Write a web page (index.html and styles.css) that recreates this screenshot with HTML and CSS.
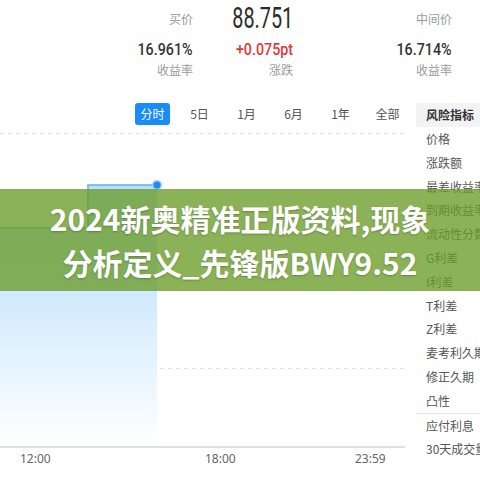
FILE: index.html
```html
<!DOCTYPE html>
<html lang="zh-CN">
<head>
<meta charset="utf-8">
<title>风险指标</title>
<link rel="stylesheet" href="styles.css">
</head>
<body>
<div class="page">
  <section class="quote">
    <div class="cell lbl top">买价</div>
    <div class="cell big"><span>88.751</span></div>
    <div class="cell lbl top">中间价</div>
    <div class="cell val"><span>16.961%</span></div>
    <div class="cell val up"><span>+0.075pt</span></div>
    <div class="cell val"><span>16.714%</span></div>
    <div class="cell lbl">收益率</div>
    <div class="cell lbl">涨跌</div>
    <div class="cell lbl">收益率</div>
  </section>

  <section class="main">
    <div class="chart">
      <nav class="tabs">
        <span class="tab active">分时</span>
        <span class="tab">5日</span>
        <span class="tab">1月</span>
        <span class="tab">6月</span>
        <span class="tab">1年</span>
        <span class="tab">全部</span>
      </nav>
      <svg class="plot" width="405" height="316" viewBox="0 0 405 316">
        <defs>
          <linearGradient id="fill" x1="0" y1="0" x2="0" y2="1">
            <stop offset="0" stop-color="#b9defe"/>
            <stop offset="0.45" stop-color="#d3ebfe"/>
            <stop offset="1" stop-color="#ffffff"/>
          </linearGradient>
        </defs>
        <line class="grid" x1="0" y1="0.5" x2="405" y2="0.5"/>
        <line class="grid" x1="0" y1="109.5" x2="405" y2="109.5"/>
        <line class="grid" x1="0" y1="235.5" x2="405" y2="235.5"/>
        <path d="M0 95 H88 V52 H157 V314 H0 Z" fill="url(#fill)"/>
        <path d="M0 95 H88 V52 H157" fill="none" stroke="#5fb0f5" stroke-width="1.5"/>
        <circle cx="157" cy="52" r="5" fill="#9fd0fb"/>
        <circle cx="157" cy="52" r="3.6" fill="#1c8df5"/>
        <line x1="0" y1="314" x2="405" y2="314" stroke="#d6d6d6" stroke-width="1.5"/>
      </svg>
      <div class="times"><span>12:00</span><span>18:00</span><span>23:59</span></div>
    </div>

    <aside class="menu">
      <div class="menu-head">风险指标</div>
      <ul class="menu-list">
        <li>价格</li>
        <li>涨跌额</li>
        <li>最差收益率</li>
        <li>到期收益率</li>
        <li>流动性分数</li>
        <li>G利差</li>
        <li>I利差</li>
        <li>T利差</li>
        <li>Z利差</li>
        <li>麦考利久期</li>
        <li>修正久期</li>
        <li>凸性</li>
      </ul>
      <ul class="menu-list sep">
        <li>应付利息</li>
        <li>30天成交量</li>
      </ul>
    </aside>
  </section>

  <div class="banner">
    <p>2024新奥精准正版资料,现象</p>
    <p>分析定义_先锋版BWY9.52</p>
  </div>
</div>
</body>
</html>
```

FILE: styles.css
```css
* { box-sizing: border-box; }

html, body {
  margin: 0;
  padding: 0;
  background: #ffffff;
}

body {
  font-family: "Noto Sans", "Noto Sans CJK SC", sans-serif;
  color: #333333;
  width: 480px;
  height: 480px;
  overflow: hidden;
}

.page {
  position: relative;
  width: 480px;
  height: 480px;
}

/* ---------- quote header ---------- */
.quote {
  display: grid;
  grid-template-columns: 193px 100px 159px;
  grid-template-rows: 38px 22px 22px;
  height: 100px;
}

.cell {
  text-align: right;
  white-space: nowrap;
}

.lbl {
  font-size: 12px;
  line-height: 20px;
  color: #9a9a9a;
  font-family: "Noto Sans CJK SC", sans-serif;
}

.lbl.top {
  align-self: center;
}

.big {
  align-self: center;
  font-family: Roboto, "Liberation Sans", sans-serif;
  font-size: 30px;
  line-height: 32px;
  color: #2b2b2b;
  margin-top: -3px;
}

.big span,
.val span {
  display: inline-block;
  transform-origin: right center;
}

.big span {
  transform: scaleX(0.66);
}

.val {
  font-family: Roboto, "Liberation Sans", sans-serif;
  font-size: 17px;
  font-weight: 500;
  line-height: 22px;
  color: #333333;
}

.val span {
  transform: scaleX(0.84);
}

.val.up {
  color: #e5363b;
}

/* ---------- main area ---------- */
.main {
  display: flex;
  align-items: flex-start;
}

.chart {
  width: 405px;
  flex: none;
}

.tabs {
  display: flex;
  gap: 12px;
  padding: 3px 0 0 135px;
  height: 33px;
}

.tab {
  width: 35px;
  height: 22px;
  line-height: 22px;
  text-align: center;
  font-size: 12px;
  color: #555555;
  font-family: "Noto Sans CJK SC", sans-serif;
  border-radius: 3px;
}

.tab.active {
  background: #1a8cf7;
  color: #ffffff;
}

.plot {
  display: block;
}

.grid {
  stroke: #e1e1e1;
  stroke-width: 1;
  stroke-dasharray: 4 4;
}

.times {
  display: flex;
  padding-left: 20px;
  font-size: 12px;
  line-height: 20px;
  color: #666666;
}

.times span {
  width: 30px;
  text-align: center;
}

.times span:nth-child(2) {
  margin-left: 155px;
}

.times span:nth-child(3) {
  margin-left: 120px;
}

/* ---------- right menu ---------- */
.menu {
  margin: 3px 0 0 11px;
  width: 64px;
  flex: none;
  overflow: hidden;
  white-space: nowrap;
  font-family: "Noto Sans CJK SC", sans-serif;
  font-size: 12px;
}

.menu-head {
  height: 24px;
  line-height: 24px;
  padding-left: 10px;
  background: #f3f3f3;
  font-weight: 700;
  color: #333333;
}

.menu-list {
  list-style: none;
  margin: 0;
  padding: 0;
}

.menu-list li {
  height: 23.8px;
  line-height: 23.8px;
  padding-left: 10px;
  color: #555555;
}

.menu-list.sep {
  border-top: 1px solid #e3e3e3;
}

/* ---------- overlay banner ---------- */
.banner {
  position: absolute;
  left: 0;
  top: 189px;
  width: 480px;
  height: 102px;
  padding-top: 7px;
  background: rgba(106, 156, 40, 0.78);
  text-align: center;
  color: #ffffff;
  font-family: "Noto Sans CJK SC", "Noto Sans", sans-serif;
  font-weight: 700;
  font-size: 30px;
  line-height: 44px;
  text-shadow: 0 1px 2px rgba(0, 0, 0, 0.25);
}

.banner p {
  margin: 0;
  white-space: nowrap;
}
```
